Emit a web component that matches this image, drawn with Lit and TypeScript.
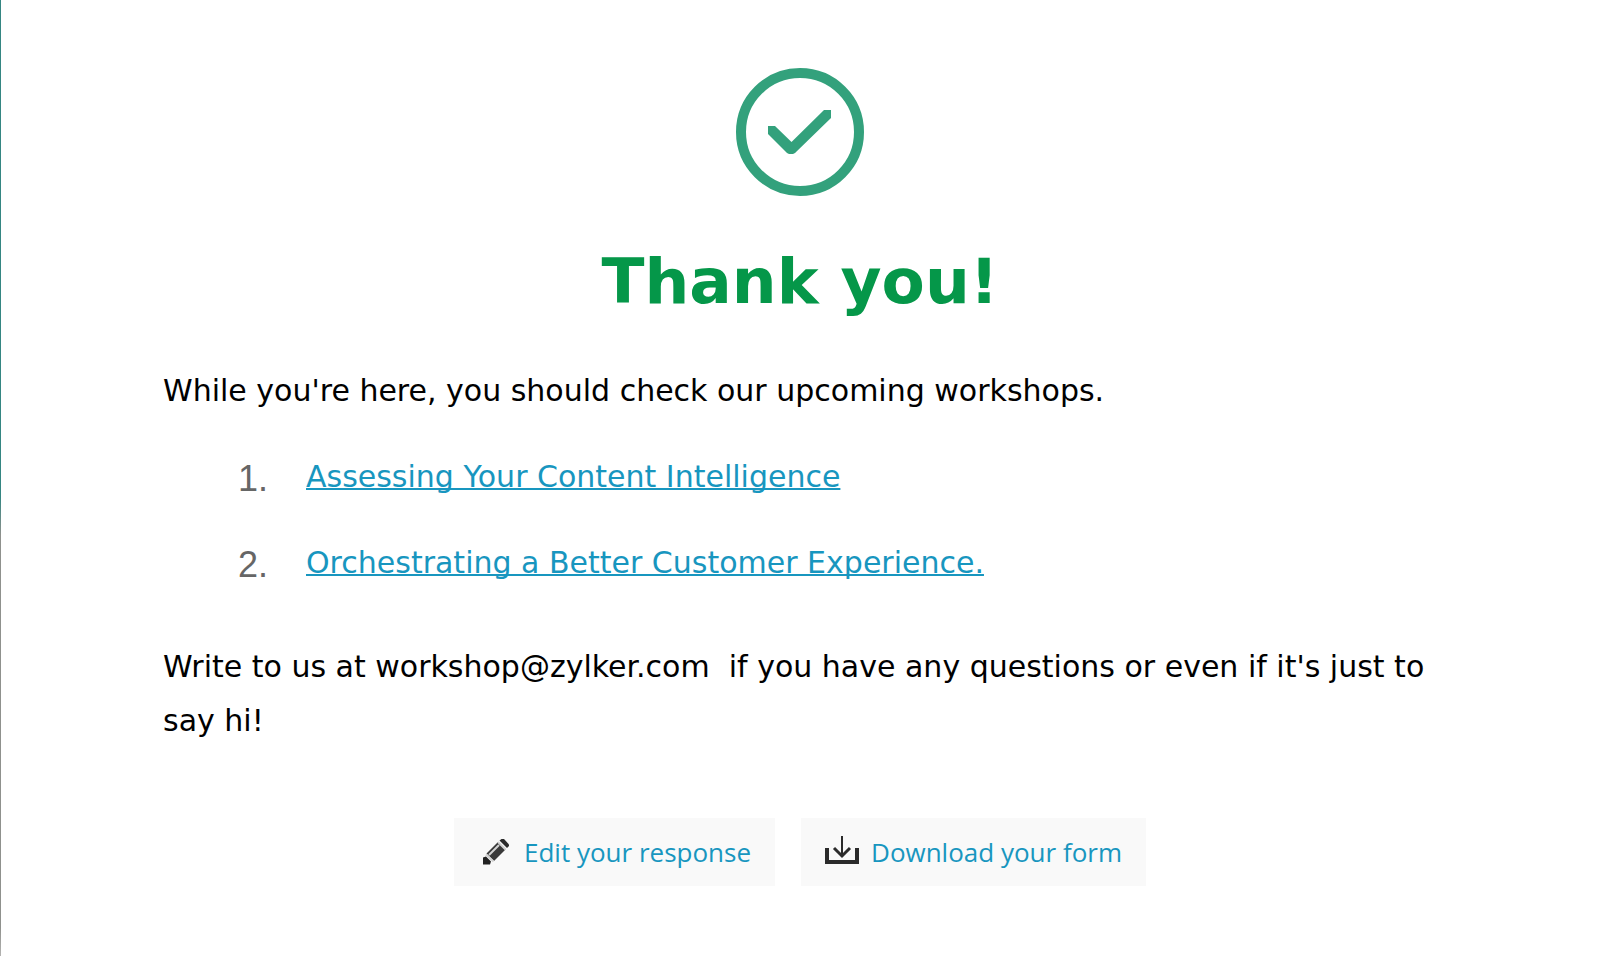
import { LitElement, html, css, svg } from "lit";
import { customElement } from "lit/decorators.js";

const pencil = svg`
  <path d="M5 29.500v-7l3-1 5 5-1 3z" fill="#222"/>
  <path d="M8.500 18.500L20 7l7.500 7.500L16 26z" fill="#3a3a3a"/>
  <path d="M8 19.500l7.500 7M11 20L21 10" stroke="#d2d2d2" stroke-width="2" fill="none"/>
  <path d="M20 7l7.500 7.500" stroke="#d2d2d2" stroke-width="2"/>
  <path d="M21.500 5.500L23.500 4H26l5 5.500v1.500l-2 2z" fill="#2b2b2b"/>`;

const download = svg`
  <path d="M2 13v14h30V13" stroke="#2b2b2b" stroke-width="4" fill="none"/>
  <path d="M17 1v20" stroke="#2b2b2b" stroke-width="2" fill="none"/>
  <path d="M9 13l8 8 8-8" stroke="#2b2b2b" stroke-width="3" fill="none"/>`;

@customElement("app-root")
export class AppRoot extends LitElement {
  static styles = css`
    :host {
      display: block;
      box-sizing: border-box;
      min-height: 100vh;
      background: linear-gradient(#358682 0 52%, #8f918d 56% 97%, #b4b4b2) left / 1px 100% no-repeat #fff;
      color: #000;
      font-family: Verdana, "DejaVu Sans", sans-serif;
      font-size: 30px;
      line-height: 54px;
    }
    main { display: flex; flex-direction: column; padding: 68px 163px 70px; }
    .check { align-self: center; width: 128px; height: 128px; }
    h1 { margin: 46px 0 0; text-align: center; color: #059749; font-size: 63px; line-height: 80px; }
    p { margin: 0; }
    .intro { margin-top: 42px; }
    ol { margin: 32px 0 46px; padding: 0; list-style: none; display: grid; gap: 28px; }
    li { display: flex; gap: 38px; }
    .num { width: 105px; text-align: right; color: #666; font: 36px/58px "Liberation Sans", sans-serif; }
    a { color: #1896bf; text-decoration-thickness: 2px; text-decoration-skip-ink: none; }
    .actions { display: flex; justify-content: center; gap: 26px; margin-top: 70px; }
    button {
      display: flex;
      align-items: center;
      gap: 12px;
      height: 68px;
      padding: 0 24px;
      border: 0;
      background: #f9f9f9;
      color: #1896bf;
      font: 26px/38px "Open Sans", sans-serif;
      cursor: pointer;
    }
    .icon { width: 34px; height: 34px; }
  `;

  render() {
    return html`<main>
      <svg class="check" viewBox="0 0 128 128" aria-hidden="true">
        <circle cx="64" cy="64" r="59" fill="none" stroke="#33a17c" stroke-width="10"/>
        <path d="M32 58h7l16.500 16L88 42h7v8L59 85l-2 1h-4l-2-1L32 66z" fill="#33a17c"/>
      </svg>
      <h1>Thank you!</h1>
      <p class="intro">While you're here, you should check our upcoming workshops.</p>
      <ol>
        <li><span class="num">1.</span><a href="#">Assessing Your Content Intelligence</a></li>
        <li><span class="num">2.</span><a href="#">Orchestrating a Better Customer Experience.</a></li>
      </ol>
      <p>Write to us at workshop@zylker.com &nbsp;if you have any questions or even if it's just to say hi!</p>
      <div class="actions">
        <button type="button"><svg class="icon" viewBox="0 0 34 34" aria-hidden="true">${pencil}</svg>Edit your response</button>
        <button type="button"><svg class="icon" viewBox="0 0 34 34" aria-hidden="true">${download}</svg>Download your form</button>
      </div>
    </main>`;
  }
}
